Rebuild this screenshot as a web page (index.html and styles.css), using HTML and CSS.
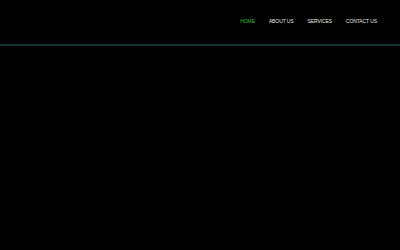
FILE: index.html
```html
<!DOCTYPE html>
<html>
<head>
  <meta charset="UTF-8">
  <meta name="viewport" content="width=device-width, initial-scale=1.0">
  <title>Home</title>
  <link rel="stylesheet" href="styles.css">
</head>
<body>
  <div class="header">
    <nav class="menu">
      <a href="#" class="active">Home</a>
      <a href="#">About us</a>
      <a href="#">Services</a>
      <a href="#">Contact us</a>
    </nav>
  </div>
</body>
</html>
```
FILE: styles.css
```css
html, body {
  background: #000;
}
body {
  font-family: "Liberation Sans", Arial, sans-serif;
  margin: 0;
  height: 250px;
}
.header {
  height: 44px;
  border-bottom: 2px solid #0f3833;
  display: flex;
  justify-content: flex-end;
  align-items: flex-start;
}
.menu {
  display: flex;
  gap: 14px;
  padding: 18px 23px 0 0;
}
.menu a {
  color: #e4e4e4;
  text-decoration: none;
  text-transform: uppercase;
  font-size: 5px;
  line-height: 7px;
  letter-spacing: -0.1px;
}
.menu a.active {
  color: #2fc23a;
}
```
